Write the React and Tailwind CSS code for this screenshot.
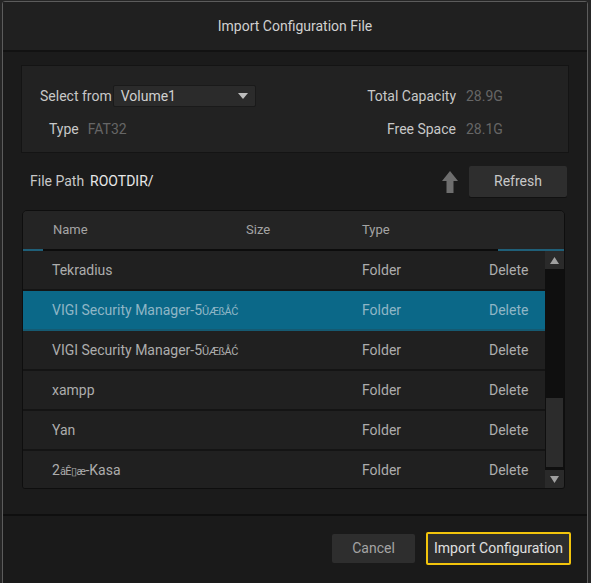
import React from 'react';

const rows = [
  { name: 'Tekradius' },
  { name: 'VIGI Security Manager-5', tail: 'ÛÆßÅĆ', active: true },
  { name: 'VIGI Security Manager-5', tail: 'ÛÆßÅĆ' },
  { name: 'xampp' },
  { name: 'Yan' },
  { name: '2', tail: 'âÊ▯æ', after: '-Kasa' },
];

const UpArrow = () => (
  <svg width="18" height="24" viewBox="0 0 18 24">
    <path d="M9 1 L17 11 L12.5 11 L12.5 23 L5.5 23 L5.5 11 L1 11 Z" fill="#6e6e6e" />
  </svg>
);

const App = () => {
  return (
    <div
      className="w-[591px] h-[583px] bg-[#262626] pl-[2px] pt-[1px] overflow-hidden text-[14px]"
      style={{ fontFamily: 'Roboto, "Liberation Sans", sans-serif' }}
    >
      <div className="w-[586px] h-[600px] border border-[#5c5c5c] rounded-t-[3px] bg-[#1b1b1b] flex flex-col">
        {/* header */}
        <div className="h-[50px] bg-[#202020] border-b-2 border-[#121212] flex items-center justify-center text-[#d0d0d0]">
          Import Configuration File
        </div>

        <div className="px-[18px] pt-[13px]">
          {/* volume info */}
          <div className="h-[88px] bg-[#222] border border-[#141414] flex justify-between px-[18px] pt-[19px]">
            <div className="flex flex-col gap-[11px]">
              <div className="flex items-center h-[22px]">
                <span className="text-[#c8c8c8]">Select from</span>
                <div className="ml-[1px] w-[143px] h-[22px] bg-[#2b2b2b] border border-[#1a1a1a] rounded-[2px] flex items-center justify-between pl-[7px] pr-[7px] text-[#d0d0d0]">
                  <span>Volume1</span>
                  <svg width="10" height="6" viewBox="0 0 10 6">
                    <path d="M0 0 L10 0 L5 6 Z" fill="#bdbdbd" />
                  </svg>
                </div>
              </div>
              <div className="flex items-center h-[22px] pl-[9px]">
                <span className="text-[#c8c8c8]">Type</span>
                <span className="ml-[9px] text-[#666]">FAT32</span>
              </div>
            </div>
            <div className="flex flex-col gap-[11px] pr-[44px]">
              <div className="flex items-center justify-end h-[22px]">
                <span className="text-[#c8c8c8]">Total Capacity</span>
                <span className="ml-[10px] text-[#666] w-[40px]">28.9G</span>
              </div>
              <div className="flex items-center justify-end h-[22px]">
                <span className="text-[#c8c8c8]">Free Space</span>
                <span className="ml-[10px] text-[#666] w-[40px]">28.1G</span>
              </div>
            </div>
          </div>

          {/* file path */}
          <div className="mt-[13px] h-[31px] flex items-center pl-[9px] pr-[2px]">
            <span className="text-[#c8c8c8]">File Path</span>
            <span className="ml-[6px] text-[#e8e8e8]">ROOTDIR/</span>
            <div className="ml-auto mr-[10px] flex items-center">
              <UpArrow />
            </div>
            <button className="w-[98px] h-[31px] bg-[#2e2e2e] rounded-[2px] text-[#c8c8c8] shadow-[0_1px_0_#111]">
              Refresh
            </button>
          </div>

          {/* table */}
          <div className="mt-[13px] ml-[1px] w-[543px] h-[279px] bg-[#1f1f1f] border border-[#0e0e0e] rounded-t-[5px] rounded-b-[3px] flex flex-col overflow-hidden">
            <div className="h-[38px] bg-[#242424] flex items-center text-[13px] text-[#a4a4a4] shrink-0">
              <span className="ml-[30px] w-[193px]">Name</span>
              <span className="w-[116px]">Size</span>
              <span>Type</span>
            </div>
            <div className="h-[2px] bg-[#0c0c0c] flex justify-between shrink-0">
              <div className="w-[20px] h-[2px] bg-[#1f5f78]" />
              <div className="w-[66px] h-[2px] bg-[#1f5f78]" />
            </div>
            <div className="flex flex-1 min-h-0">
              <div className="flex-1 flex flex-col">
                {rows.map((r, i) => (
                  <div
                    key={i}
                    className={`h-[40px] shrink-0 flex items-center border-b-2 ${
                      r.active
                        ? 'bg-[#0b6888] border-[#155a72] text-[#8fb6c6]'
                        : 'bg-[#202020] border-[#141414] text-[#adadad]'
                    }`}
                  >
                    <span className="ml-[29px] w-[185px] whitespace-nowrap">
                      {r.name}
                      {r.tail && <span className="text-[11px] tracking-[-0.5px]">{r.tail}</span>}
                      {r.after}
                    </span>
                    <span className="ml-[125px] w-[127px]">Folder</span>
                    <span>Delete</span>
                  </div>
                ))}
              </div>
              <div className="w-[19px] bg-[#0f0f0f] flex flex-col">
                <div className="h-[18px] bg-[#2a2a2a] flex items-center justify-center">
                  <svg width="9" height="7" viewBox="0 0 9 7">
                    <path d="M0 7 L9 7 L4.5 0 Z" fill="#a0a0a0" />
                  </svg>
                </div>
                <div className="flex-1 flex flex-col justify-end pb-[3px]">
                  <div className="h-[69px] mx-[1px] bg-[#2c2c2c]" />
                </div>
                <div className="h-[18px] bg-[#2a2a2a] flex items-center justify-center">
                  <svg width="9" height="7" viewBox="0 0 9 7">
                    <path d="M0 0 L9 0 L4.5 7 Z" fill="#a0a0a0" />
                  </svg>
                </div>
              </div>
            </div>
          </div>
        </div>

        {/* footer */}
        <div className="mt-[25px] border-t-2 border-[#0f0f0f] bg-[#1a1a1a] h-[70px] flex items-start justify-end pr-[16px] pt-[16px] gap-[11px]">
          <button className="mt-[2px] w-[83px] h-[29px] bg-[#2e2e2e] rounded-[2px] text-[#a4a4a4]">
            Cancel
          </button>
          <button className="w-[145px] h-[33px] bg-[#2e2e2e] border-2 border-[#f2c40c] rounded-[2px] text-[#e0e0e0]">
            Import Configuration
          </button>
        </div>
      </div>
    </div>
  );
};

export default App;
